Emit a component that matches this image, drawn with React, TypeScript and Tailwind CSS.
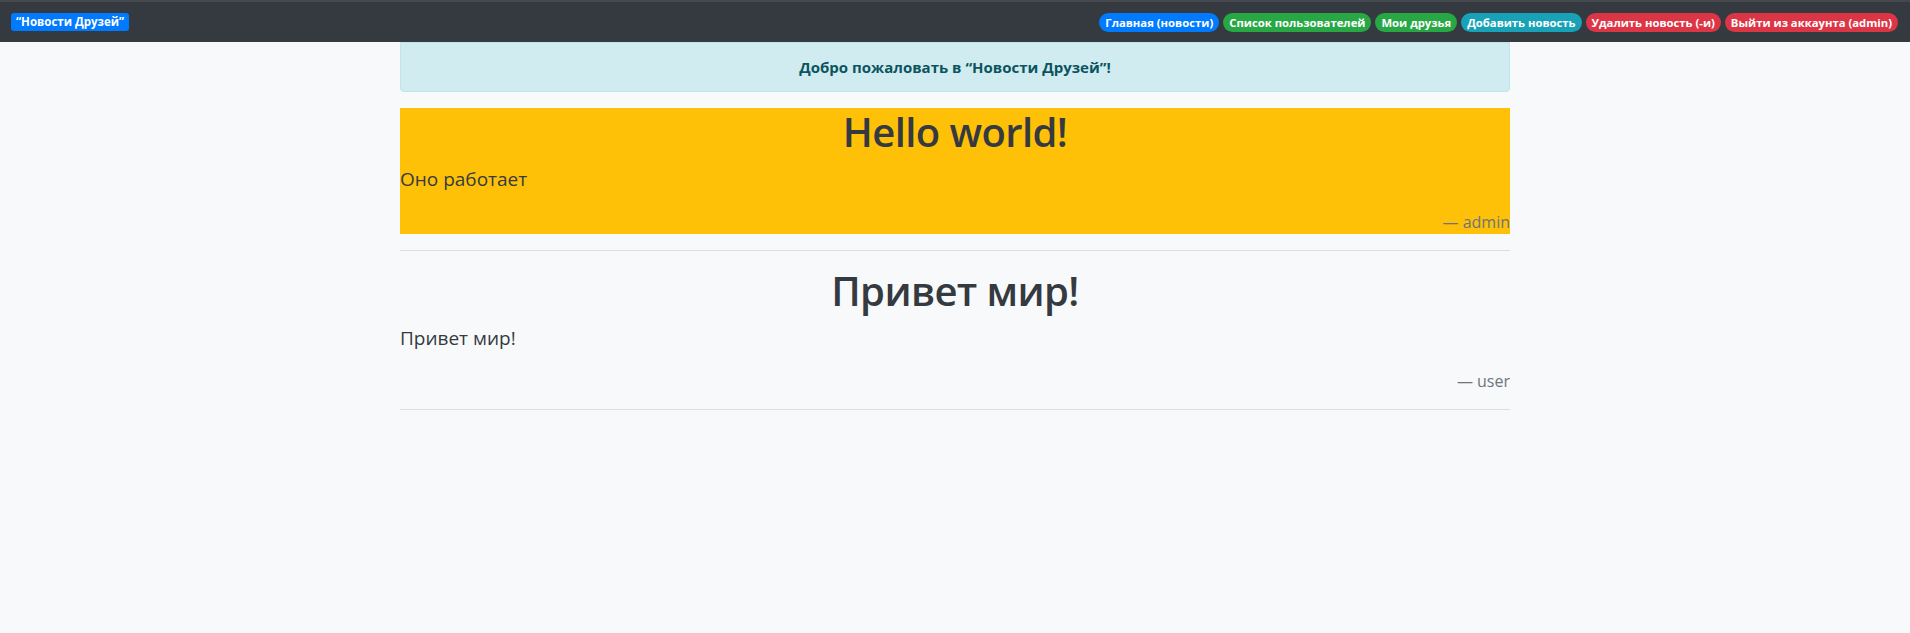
import React from 'react';

// Главная страница "Новости Друзей"

type NavLink = { label: string; color: string };

const navLinks: NavLink[] = [
  { label: 'Главная (новости)', color: 'bg-[#007bff]' },
  { label: 'Список пользователей', color: 'bg-[#28a745]' },
  { label: 'Мои друзья', color: 'bg-[#28a745]' },
  { label: 'Добавить новость', color: 'bg-[#17a2b8]' },
  { label: 'Удалить новость (-и)', color: 'bg-[#dc3545]' },
  { label: 'Выйти из аккаунта (admin)', color: 'bg-[#dc3545]' },
];

type Post = { title: string; body: string; author: string; highlight?: boolean };

const posts: Post[] = [
  { title: 'Hello world!', body: 'Оно работает', author: 'admin', highlight: true },
  { title: 'Привет мир!', body: 'Привет мир!', author: 'user' },
];

const PostItem: React.FC<{ post: Post }> = ({ post }) => (
  <>
    <div className={post.highlight ? 'bg-[#ffc107]' : ''}>
      <h1 className="text-center text-[40px] leading-[48px] font-semibold tracking-[-0.6px] mb-2">{post.title}</h1>
      <p className="text-[19px] leading-[30px] font-normal mb-4">{post.body}</p>
      <footer className="text-right text-[16px] leading-6 text-[#6c757d]">— {post.author}</footer>
    </div>
    <hr className="my-4 border-0 border-t border-[#dcdee0]" />
  </>
);

export default function App() {
  return (
    <div
      className="min-h-[633px] bg-[#f8f9fa] text-[#343a40]"
      style={{ fontFamily: '"Open Sans", "Noto Sans", sans-serif' }}
    >
      {/* Navbar */}
      <nav className="h-[42px] bg-[#343a40] border-t-2 border-[#45494e] flex items-center justify-between pl-[11px] pr-[12px]">
        <span className="bg-[#007bff] text-white text-[11.5px] leading-[18px] font-bold px-[5px] rounded-[3px]">
          “Новости Друзей”
        </span>
        <div className="flex items-center gap-[4px]">
          {navLinks.map((l) => (
            <span
              key={l.label}
              className={`${l.color} text-white text-[11.3px] leading-[19px] font-bold px-[6px] rounded-full`}
            >
              {l.label}
            </span>
          ))}
        </div>
      </nav>

      {/* Content */}
      <main className="w-[1110px] mx-auto">
        <div className="bg-[#d1ecf1] border border-[#bee5eb] rounded-b-[4px] text-[#0c5460] text-center font-bold text-[15px] leading-6 py-3 mb-4">
          Добро пожаловать в “Новости Друзей”!
        </div>
        {posts.map((p) => (
          <PostItem key={p.title} post={p} />
        ))}
      </main>
    </div>
  );
}
